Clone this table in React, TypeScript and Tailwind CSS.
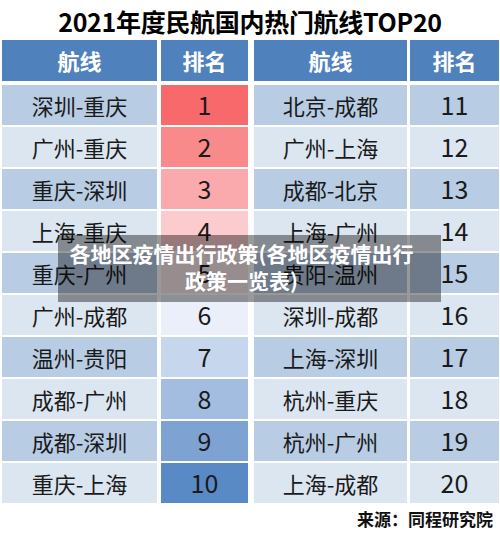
const left = [
  { route: '深圳-重庆', rank: 1, color: 'bg-[#f8696b]' },
  { route: '广州-重庆', rank: 2, color: 'bg-[#f98a8c]' },
  { route: '重庆-深圳', rank: 3, color: 'bg-[#faaaad]' },
  { route: '上海-重庆', rank: 4, color: 'bg-[#fbcbce]' },
  { route: '重庆-广州', rank: 5, color: 'bg-[#fcecef]' },
  { route: '广州-成都', rank: 6, color: 'bg-[#eaeff9]' },
  { route: '温州-贵阳', rank: 7, color: 'bg-[#c6d6ec]' },
  { route: '成都-广州', rank: 8, color: 'bg-[#a2bddf]' },
  { route: '成都-深圳', rank: 9, color: 'bg-[#7ea3d3]' },
  { route: '重庆-上海', rank: 10, color: 'bg-[#5a8ac6]' },
];

const right = [
  '北京-成都',
  '广州-上海',
  '成都-北京',
  '上海-广州',
  '贵阳-温州',
  '深圳-成都',
  '上海-深圳',
  '杭州-重庆',
  '杭州-广州',
  '上海-成都',
];

const font = { fontFamily: '"Microsoft YaHei", "Noto Sans CJK SC", "Noto Sans", sans-serif' };

export default function App() {
  return (
    <div className="relative w-[500px] h-[538px] bg-white overflow-hidden" style={font}>
      {/* title */}
      <div className="h-[40px] flex items-center justify-center pt-[3px]">
        <h1 className="text-[25px] font-bold text-black leading-none tracking-[-0.3px]">
          2021年度民航国内热门航线TOP20
        </h1>
      </div>

      {/* header */}
      <div className="flex pl-[2px] h-[41px] text-white text-[22px] font-bold">
        <div className="w-[155px] bg-[#4f81bd] flex items-center justify-center">航线</div>
        <div className="ml-[4px] w-[87px] bg-[#4f81bd] flex items-center justify-center">排名</div>
        <div className="ml-[6px] w-[153px] bg-[#4f81bd] flex items-center justify-center">航线</div>
        <div className="ml-[3px] w-[89px] bg-[#4f81bd] flex items-center justify-center">排名</div>
      </div>

      {/* rows */}
      <div className="flex flex-col gap-[2px] mt-[4px] text-[#1a1a1a]">
        {left.map((row, i) => {
          const zebra = i % 2 === 0 ? 'bg-[#b8cce4]' : 'bg-[#dce6f1]';
          return (
            <div key={row.rank} className="flex pl-[2px] h-[40px]">
              <div className={`w-[155px] ${zebra} flex items-center justify-center text-[22px]`}>
                {row.route}
              </div>
              <div className={`ml-[4px] w-[87px] ${row.color} flex items-center justify-center text-[25px]`}>
                {row.rank}
              </div>
              <div className={`ml-[6px] w-[153px] ${zebra} flex items-center justify-center text-[22px]`}>
                {right[i]}
              </div>
              <div className={`ml-[3px] w-[89px] ${zebra} flex items-center justify-center text-[25px]`}>
                {row.rank + 10}
              </div>
            </div>
          );
        })}
      </div>

      {/* source */}
      <div className="flex justify-end pr-[7px] pt-[3px]">
        <span className="text-[17px] font-bold text-[#111]">来源：同程研究院</span>
      </div>

      {/* caption overlay */}
      <div className="absolute left-[58px] top-[235px] w-[383px] h-[67px] bg-black/40 flex flex-col items-center justify-center text-white text-[21px] font-bold leading-[27px] pb-[3px] pr-[16px]">
        <span>各地区疫情出行政策(各地区疫情出行</span>
        <span>政策一览表)</span>
      </div>
    </div>
  );
}
